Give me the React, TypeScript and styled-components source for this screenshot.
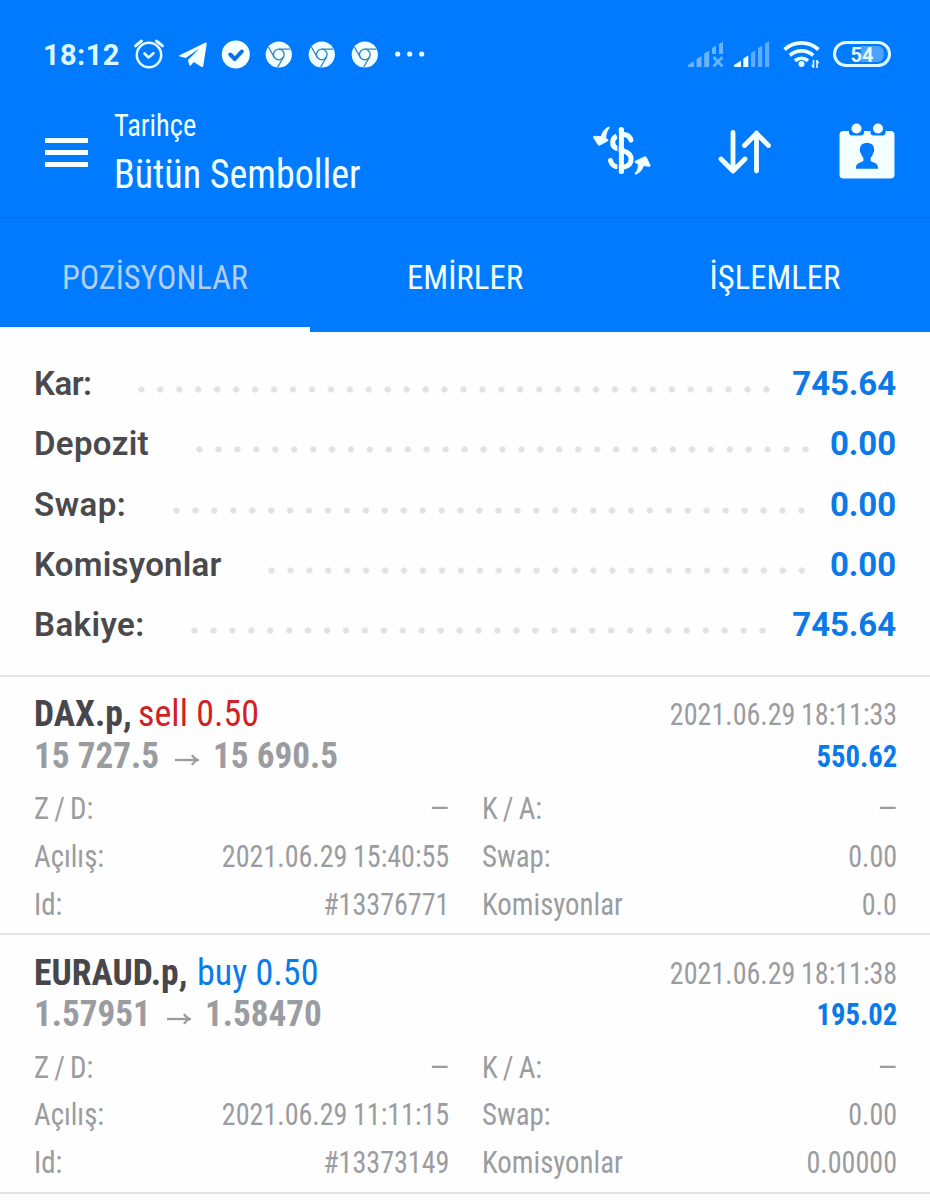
import React from 'react';
import styled, { createGlobalStyle } from 'styled-components';

const GlobalStyle = createGlobalStyle`
  *, *::before, *::after { box-sizing: border-box; }
  html, body { margin: 0; padding: 0; background: #fff; }
  body { font-family: Roboto, "Liberation Sans", sans-serif; }
`;

const Screen = styled.div`
  width: 930px;
  height: 1200px;
  overflow: hidden;
  background: #fefefe;
`;

/* Condensed text with a fine horizontal scale, anchored on one edge. */
const Narrow = styled.span<{ $x: number; $from?: string }>`
  display: inline-block;
  white-space: pre;
  font-family: "Roboto Condensed", Roboto, sans-serif;
  font-stretch: 75%;
  transform: scaleX(${(p) => p.$x});
  transform-origin: ${(p) => p.$from ?? 'left'} center;
`;

const TopBlock = styled.header`
  background: #007aff;
  color: #f1ffff;
`;

const StatusBar = styled.div`
  display: flex;
  align-items: center;
  justify-content: space-between;
  height: 108px;
  padding: 0 39px 0 43px;
`;

const StatusGroup = styled.div`
  display: flex;
  align-items: center;
  gap: 13px;
`;

const Clock = styled.span`
  width: 76px;
  margin-right: 1px;
  padding-top: 2px;
  font-size: 29px;
  line-height: 34px;
  font-weight: 700;
  letter-spacing: 0.4px;
  white-space: nowrap;
  color: #dcf7ff;
`;

const Battery = styled.div`
  display: flex;
  align-items: center;
  justify-content: center;
  width: 58px;
  height: 26px;
  border: 3px solid #dff8ff;
  border-radius: 13px;
  background: linear-gradient(90deg, transparent 50%, #4ba3ff 50%) content-box;
  padding: 2px 4px 2px 2px;
  font-size: 20px;
  line-height: 20px;
  font-weight: 700;
  color: #e6faff;
`;

const BatteryLevel = styled.span`
  padding: 2px 0 0 2px;
`;

const TitleBar = styled.div`
  display: flex;
  align-items: flex-start;
  height: 110px;
  padding: 0 35px 0 45px;
  border-bottom: 1px solid #026fe8;
`;

const MenuButton = styled.div`
  display: flex;
  flex-direction: column;
  gap: 7px;
  width: 43px;
  margin: 30px 26px 0 0;
`;

const MenuLine = styled.span`
  height: 5px;
  background: #f4ffff;
`;

const Titles = styled.div`
  flex: 1;
  display: flex;
  flex-direction: column;
`;

const Subtitle = styled.div`
  font-size: 31px;
  line-height: 36px;
`;

const Title = styled.div`
  font-size: 40px;
  line-height: 61px;
`;

const Actions = styled.div`
  display: flex;
  align-items: center;
  margin-top: 15px;
  gap: 67px;
`;

const Tabs = styled.nav`
  display: grid;
  grid-template-columns: repeat(3, 1fr);
  height: 114px;
`;

const Tab = styled.div<{ $active?: boolean }>`
  display: flex;
  align-items: center;
  justify-content: center;
  padding-top: ${(p) => (p.$active ? 9 : 4)}px;
  font-size: 34px;
  line-height: 40px;
  color: ${(p) => (p.$active ? '#b1cff3' : '#f1ffff')};
  border-bottom: ${(p) => (p.$active ? '5px solid #fefefe' : '0')};
`;

const Summary = styled.section`
  display: flex;
  flex-direction: column;
  height: 342.5px;
  padding: 22px 34px 0;
`;

const SummaryRow = styled.div`
  display: flex;
  height: 60.3px;
  font-size: 33px;
  line-height: 60px;
  font-weight: 700;
`;

const SummaryLabel = styled.span<{ $spacing: number }>`
  color: #4a4a4d;
  font-weight: 600;
  letter-spacing: ${(p) => p.$spacing}px;
`;

const Leader = styled.span<{ $dots: number }>`
  width: ${(p) => p.$dots * 18.95 - 11}px;
  height: 7px;
  margin: 32px auto 0 46.5px;
  background: radial-gradient(circle at 3.5px 3.5px, #e2e2e3 2.7px, transparent 3.6px) 0 0 / 18.95px 7px repeat-x;
`;

const SummaryValue = styled.span`
  color: #0c7ae6;
  letter-spacing: -0.1px;
`;

const TradeCard = styled.article`
  height: 258.5px;
  padding: 15.5px 33px 0 34px;
  border-top: 2.5px solid #e3e3e4;
`;

const TradeLine = styled.div`
  display: flex;
  justify-content: space-between;
  height: 41.5px;
  font-size: 37px;
  line-height: 43px;
  white-space: nowrap;
`;

const Heading = styled.div`
  display: flex;
`;

const Symbol = styled.span<{ $w: number }>`
  width: ${(p) => p.$w}px;
  font-weight: 700;
  color: #47474b;
`;

const Side = styled.span<{ $side: 'sell' | 'buy' }>`
  color: ${(p) => (p.$side === 'sell' ? '#d11f26' : '#0a7cea')};
`;

const Prices = styled.div`
  display: flex;
  font-weight: 700;
  color: #9b9ca0;
`;

const OpenPrice = styled.span<{ $w: number }>`
  width: ${(p) => p.$w}px;
`;

const ArrowSlot = styled.span`
  width: 55px;
  display: flex;
  align-items: center;
  padding: 12px 0 0 16px;
`;

const CloseTime = styled.span`
  display: flex;
  justify-content: flex-end;
  font-size: 31px;
  line-height: 46px;
  word-spacing: -1px;
  color: #9b9ca0;
`;

const Profit = styled(CloseTime)`
  font-weight: 700;
  color: #0a7aea;
`;

const Details = styled.div`
  display: grid;
  grid-template-columns: 415px 415px;
  column-gap: 33px;
  margin-top: 10px;
  font-size: 31px;
  line-height: 48px;
  color: #9b9ca0;
`;

const Detail = styled.div`
  display: flex;
  justify-content: space-between;
  height: 47.8px;
`;

const DetailLabel = styled(Narrow)`
  word-spacing: -1.6px;
`;

const DetailValue = styled(Narrow)<{ $empty: boolean }>`
  word-spacing: -1px;
  margin-right: ${(p) => (p.$empty ? -1.5 : 0)}px;
`;

const BottomRule = styled.div`
  height: 2.5px;
  background: #e3e3e4;
`;

const AlarmIcon = () => (
  <svg width="32" height="32" viewBox="0 0 32 32" fill="none" stroke="#e6faff" strokeLinecap="round">
    <circle cx="16" cy="17" r="12.2" strokeWidth="2.5" />
    <path d="M11.5 15.5 15.5 19.5 20.5 15.2" strokeWidth="2.6" strokeLinejoin="round" />
    <path d="M2.5 7.8 8.5 3M29.5 7.8 23.5 3" strokeWidth="3" />
  </svg>
);

const TelegramIcon = () => (
  <svg width="30" height="28" viewBox="0 0 30 28" fill="#f4ffff">
    <path d="M1.600 15.200 27.100 2.700c1.100-.5 1.800.1 1.600 1.400l-3.400 21.700c-.2 1.200-1.200 1.500-2.100.9l-7.300-4.600-3 3.200c-.7.700-1.500.4-1.700-.5L10 20l11.500-11.800L7.800 17.900 1.700 16.600c-.8-.3-.9-1-.1-1.400z" />
  </svg>
);

const CheckIcon = () => (
  <svg width="29" height="29" viewBox="-.3 0 29 29" fill="none">
    <circle cx="14.5" cy="14.5" r="14" fill="#f4ffff" />
    <path d="m9 14.500 4.500 4.500 7-7.500" stroke="#0a6fe0" strokeWidth="4" strokeLinecap="round" strokeLinejoin="round" />
  </svg>
);

const ChromeIcon = () => (
  <svg width="30" height="27" viewBox="-2.3 0 30 27" fill="none">
    <circle cx="13.5" cy="13.5" r="13.1" fill="#f1ffff" />
    <g stroke="#2f80c8" strokeWidth="1.3">
      <circle cx="13.500" cy="13.500" r="5.300" />
      <path d="M13.500 8.200H25M8.900 16.200 3.200 6M18.100 16.200 12.300 26.300" />
    </g>
  </svg>
);

const MoreIcon = () => (
  <svg width="34" height="8" viewBox="-.7 0 34 8" fill="#e6faff">
    <circle cx="5" cy="4" r="2.600" />
    <circle cx="17" cy="4" r="2.600" />
    <circle cx="29" cy="4" r="2.600" />
  </svg>
);

const NoSignalIcon = () => (
  <svg width="33" height="27" viewBox="0 0 33 27" overflow="visible" fill="#69b3ff">
    <path d="M0 26v-2l6-4v6zM8.500 18l5-3v11h-5zM16.200 12.500l5-3V26h-5zM24 7l4-2.400V13h-4zM31 3l4-2.400V13h-4z" />
    <path d="m25.500 16 9 9.500m0-9.500-9 9.500" stroke="#69b3ff" strokeWidth="2.800" />
  </svg>
);

const SignalIcon = () => (
  <svg width="36" height="27" viewBox="0 0 36 27" fill="#5facff">
    <path d="M0 26v-2l7-4.300V26zM9.300 17.500l5-3V26h-5z" fill="#ecffff" />
    <path d="M17 12l4.200-2.500V26H17zM24 7l4.200-2.500V26H24zM31 2.500 35.200 0v26H31z" />
  </svg>
);

const WifiIcon = () => (
  <svg width="37" height="29" viewBox="0 0 37 29" fill="none" stroke="#e9fcff">
    <path d="M1.500 9.500c10-8.800 24-8.800 34 0M6.800 15.300c7-6 16.500-6 23.500 0M12 20.700c4-3.300 9-3.300 13 0" strokeWidth="3.700" />
    <circle cx="18.500" cy="24" r="3" fill="#e9fcff" stroke="none" />
    <path d="M30.500 20v8M34 20v8" strokeWidth="1.600" />
    <path d="m28.500 25 2 3v-3zM36 23l-2-3v3z" fill="#e9fcff" strokeWidth=".5" />
  </svg>
);

const CurrencyIcon = () => (
  <svg width="58" height="52" viewBox="0 0 58 52" fill="none">
    <path d="M28.300 4.500v42" stroke="#f4ffff" strokeWidth="5.200" strokeLinecap="round" />
    <g stroke="#f4ffff" strokeWidth="5" strokeLinecap="round">
      <path d="M23.800 11c-5.500 2.700-5.500 9.500-.2 12.500" strokeLinecap="butt" />
      <path d="M31 9.500c3.600.4 6.200 2.300 6.900 5.600" />
      <path d="M20 20.500c3 3.300 6.500 4 10.500 5.300 4.300 1.400 7.600 4 7.600 8.300 0 4.600-3 7.400-7.600 8.100" />
      <path d="M17.500 35.500c.7 3.200 2.600 5.200 5.800 6.200" />
    </g>
    <path d="M25 7v38" stroke="#007aff" strokeWidth="1.300" />
    <path d="M15.600 2C11.700 3.800 9.300 7 8.200 11.500l-6.900-.2c-.8 0-1.100.6-.8 1.300L5 19.600c.6.800 1.300.9 2.100.4l7.600-4.200c.6-.4.600-1 0-1.300l-1.900-.9c-.1-4.300 1-7.700 3.400-10.600.4-.6 0-1.200-.6-1zM42.600 49.200c4.300-1.400 6.800-4.500 7.900-8.700l5.600.9c.9.100 1.200-.4 1-1.100l-3.700-7.900c-.4-.8-1.100-.9-1.900-.5l-9.200 4.400c-.7.400-.7.900 0 1.300l3 1.500c.3 3.700-.7 6.300-3.100 9.100-.5.600-.3 1.200.4 1z" fill="#f1ffff" stroke="#f1ffff" strokeWidth=".8" />
  </svg>
);

const SortIcon = () => (
  <svg width="54" height="46" viewBox="0 0 54 46" fill="none" stroke="#f4ffff" strokeWidth="4.800" strokeLinecap="round" strokeLinejoin="round">
    <path d="M15 4.500v38M3 31l12 12 12-12M38.500 43V5M26.500 17.500l12-12 12 12" />
  </svg>
);

const CalendarIcon = () => (
  <svg width="56" height="56" viewBox="0 0 56 56">
    <rect x=".5" y="8" width="55" height="47.500" rx="4" fill="#f4ffff" />
    <path d="M10 7h15v2.500c0 2-1.200 3-3 3h-9c-1.800 0-3-1-3-3zM31.500 7h15v2.500c0 2-1.200 3-3 3h-9c-1.800 0-3-1-3-3z" fill="#007aff" />
    <circle cx="17.500" cy="5.500" r="5" fill="#f4ffff" />
    <circle cx="39" cy="5.500" r="5" fill="#f4ffff" />
    <path d="M28 20c4.800 0 7.300 2.700 7 6.500.5 1 .1 2.600-.8 3.300-.4 2-1.200 3.800-2.600 5v3c2 2 7.400 2 7.400 6.700v1.200H17v-1.200c0-4.700 5.400-4.700 7.400-6.700v-3c-1.400-1.200-2.200-3-2.600-5-.9-.7-1.300-2.300-.8-3.300-.3-3.800 2.200-6.500 7-6.500z" fill="#007aff" />
  </svg>
);

const ArrowIcon = () => (
  <svg width="25" height="12" viewBox="0 0 25 12" fill="none" stroke="#9b9ca0" strokeWidth="2.300">
    <path d="M1 6h22" />
    <path d="M18 1.200c1.500 2.500 3.300 4 6 4.800-2.700.8-4.500 2.300-6 4.800" />
  </svg>
);

const summary = [
  { label: 'Kar:', value: '745.64', dots: 34, spacing: -0.5 },
  { label: 'Depozit', value: '0.00', dots: 33, spacing: 0.35 },
  { label: 'Swap:', value: '0.00', dots: 34, spacing: 0.5 },
  { label: 'Komisyonlar', value: '0.00', dots: 29, spacing: 0.27 },
  { label: 'Bakiye:', value: '745.64', dots: 31, spacing: 0.45 },
];

interface Trade {
  symbol: string;
  symbolWidth: number;
  side: 'sell' | 'buy';
  open: string;
  close: string;
  openWidth: number;
  closedAt: string;
  profit: string;
  openedAt: string;
  id: string;
  commission: string;
}

const trades: Trade[] = [
  {
    symbol: 'DAX.p,', symbolWidth: 104, side: 'sell', open: '15 727.5', close: '15 690.5', openWidth: 124,
    closedAt: '2021.06.29 18:11:33', profit: '550.62', openedAt: '2021.06.29 15:40:55', id: '#13376771', commission: '0.0',
  },
  {
    symbol: 'EURAUD.p,', symbolWidth: 163, side: 'buy', open: '1.57951', close: '1.58470', openWidth: 116,
    closedAt: '2021.06.29 18:11:38', profit: '195.02', openedAt: '2021.06.29 11:11:15', id: '#13373149', commission: '0.00000',
  },
];

const DetailItem = ({ label, value }: { label: string; value: string }) => {
  const empty = value === '–';
  return (
    <Detail>
      <DetailLabel $x={0.93}>{label}</DetailLabel>
      <DetailValue $empty={empty} $x={empty ? 1.22 : 0.905} $from="right">{value}</DetailValue>
    </Detail>
  );
};

const TradeItem = ({ t }: { t: Trade }) => (
  <TradeCard>
    <TradeLine>
      <Heading>
        <Symbol $w={t.symbolWidth}><Narrow $x={0.962}>{t.symbol}</Narrow></Symbol>
        <Side $side={t.side}><Narrow $x={0.975}>{`${t.side} 0.50`}</Narrow></Side>
      </Heading>
      <CloseTime><Narrow $x={0.905} $from="right">{t.closedAt}</Narrow></CloseTime>
    </TradeLine>
    <TradeLine>
      <Prices>
        <OpenPrice $w={t.openWidth}><Narrow $x={0.95}>{t.open}</Narrow></OpenPrice>
        <ArrowSlot><ArrowIcon /></ArrowSlot>
        <Narrow $x={0.95}>{t.close}</Narrow>
      </Prices>
      <Profit><Narrow $x={0.925} $from="right">{t.profit}</Narrow></Profit>
    </TradeLine>
    <Details>
      <DetailItem label="Z / D:" value="–" />
      <DetailItem label="K / A:" value="–" />
      <DetailItem label="Açılış:" value={t.openedAt} />
      <DetailItem label="Swap:" value="0.00" />
      <DetailItem label="Id:" value={t.id} />
      <DetailItem label="Komisyonlar" value={t.commission} />
    </Details>
  </TradeCard>
);

export default function App() {
  return (
    <Screen>
      <GlobalStyle />
      <TopBlock>
        <StatusBar>
          <StatusGroup>
            <Clock>18:12</Clock>
            <AlarmIcon />
            <TelegramIcon />
            <CheckIcon />
            <ChromeIcon />
            <ChromeIcon />
            <ChromeIcon />
            <MoreIcon />
          </StatusGroup>
          <StatusGroup>
            <NoSignalIcon />
            <SignalIcon />
            <WifiIcon />
            <Battery><BatteryLevel>54</BatteryLevel></Battery>
          </StatusGroup>
        </StatusBar>
        <TitleBar>
          <MenuButton><MenuLine /><MenuLine /><MenuLine /></MenuButton>
          <Titles>
            <Subtitle><Narrow $x={0.917}>Tarihçe</Narrow></Subtitle>
            <Title><Narrow $x={0.95}>Bütün Semboller</Narrow></Title>
          </Titles>
          <Actions>
            <CurrencyIcon />
            <SortIcon />
            <CalendarIcon />
          </Actions>
        </TitleBar>
        <Tabs>
          <Tab $active><Narrow $x={0.95} $from="center">POZİSYONLAR</Narrow></Tab>
          <Tab><Narrow $x={0.968} $from="center">EMİRLER</Narrow></Tab>
          <Tab><Narrow $x={0.963} $from="center">İŞLEMLER</Narrow></Tab>
        </Tabs>
      </TopBlock>
      <Summary>
        {summary.map((s) => (
          <SummaryRow key={s.label}>
            <SummaryLabel $spacing={s.spacing}>{s.label}</SummaryLabel>
            <Leader $dots={s.dots} />
            <SummaryValue>{s.value}</SummaryValue>
          </SummaryRow>
        ))}
      </Summary>
      {trades.map((t) => <TradeItem key={t.id} t={t} />)}
      <BottomRule />
    </Screen>
  );
}
